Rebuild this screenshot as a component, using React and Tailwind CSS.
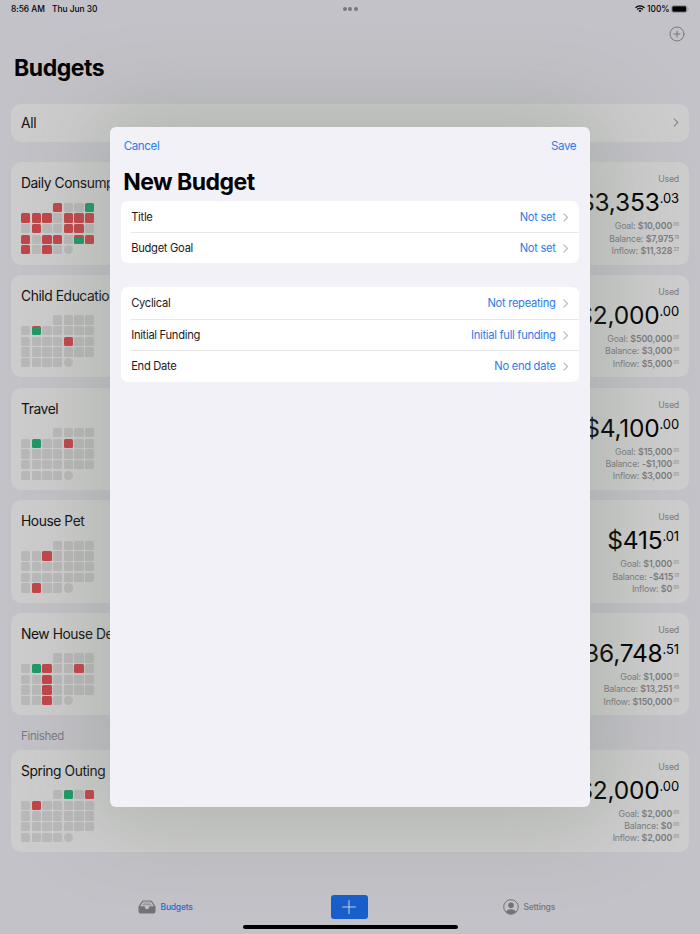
import React from "react";

// Calendar cells: "." empty day, r spending, g income, n/m both, o today, " " outside the month.
const budgets = [
  {
    name: "Daily Consumption",
    cells: ["   r..g", "rrr.rrr", ".r..rr.", "r.rr.mr", "r.r.o"].join(""),
    whole: "$3,353",
    cents: ".03",
    rows: [["Goal:", "$10,000", ".00"], ["Balance:", "$7,975", ".19"], ["Inflow:", "$11,328", ".22"]],
  },
  {
    name: "Child Education",
    cells: ["   ....", ".n.....", "....r..", ".......", "....o"].join(""),
    whole: "$2,000",
    cents: ".00",
    rows: [["Goal:", "$500,000", ".00"], ["Balance:", "$3,000", ".00"], ["Inflow:", "$5,000", ".00"]],
  },
  {
    name: "Travel",
    cells: ["   ....", ".g..r..", ".......", ".......", "....o"].join(""),
    whole: "$4,100",
    cents: ".00",
    rows: [["Goal:", "$15,000", ".00"], ["Balance:", "-$1,100", ".00"], ["Inflow:", "$3,000", ".00"]],
  },
  {
    name: "House Pet",
    cells: ["   ....", "..r....", ".......", ".......", ".r..o"].join(""),
    whole: "$415",
    cents: ".01",
    rows: [["Goal:", "$1,000", ".00"], ["Balance:", "-$415", ".01"], ["Inflow:", "$0", ".00"]],
  },
  {
    name: "New House Decor",
    cells: ["   ....", ".gr..r.", "..r....", "..r....", "..r.o"].join(""),
    whole: "$136,748",
    cents: ".51",
    rows: [["Goal:", "$1,000", ".00"], ["Balance:", "$13,251", ".49"], ["Inflow:", "$150,000", ".00"]],
  },
];

const finished = {
  name: "Spring Outing",
  cells: ["   .g.r", ".r.....", ".......", ".......", "....o"].join(""),
  whole: "$2,000",
  cents: ".00",
  rows: [["Goal:", "$2,000", ".00"], ["Balance:", "$0", ".00"], ["Inflow:", "$2,000", ".00"]],
};

const cellStyles = {
  " ": "",
  ".": "rounded-[1.5px] bg-[#b9b9b9]",
  r: "rounded-[1.5px] bg-[#c24549]",
  g: "rounded-[1.5px] bg-[#1f9865]",
  n: "rounded-[1.5px] bg-linear-to-b from-[#c24549] from-12% to-[#1f9865] to-12%",
  m: "rounded-[1.5px] bg-linear-to-b from-[#c24549] from-35% to-[#1f9865] to-35%",
  o: "rounded-full bg-[#b9b9b9]",
};

function Chevron({ className }) {
  return (
    <svg viewBox="0 0 6 10" className={className} fill="none" stroke="currentColor" strokeWidth="1.3" strokeLinecap="round" strokeLinejoin="round">
      <path d="M1 1l4 4-4 4" />
    </svg>
  );
}

function Card({ b }) {
  return (
    <div className="flex h-[102.4px] shrink-0 justify-between rounded-[10px] bg-[#cdcdcd] pt-[12px] pr-[10px] pl-[10px]">
      <div>
        <div className="text-[13.8px] leading-[18px] tracking-[-0.42px] whitespace-nowrap text-[#111]">{b.name}</div>
        <div className="mt-[10.4px] grid w-[73.4px] grid-cols-7 gap-[1.4px]">
          {b.cells.split("").map((c, i) => (
            <div key={i} className={"h-[9.25px] " + cellStyles[c]} />
          ))}
        </div>
      </div>
      <div className="flex flex-col items-end whitespace-nowrap text-[#7c7c7e]">
        <div className="h-[10px] text-[8.8px] leading-[10px] tracking-[-0.25px]">Used</div>
        <div className="mt-[3px] flex h-[30px] items-start text-black">
          <span className="text-[24.5px] leading-[30px] tracking-[-0.2px]">{b.whole}</span>
          <span className="text-[13px] leading-[22.5px] tracking-[-0.1px]">{b.cents}</span>
        </div>
        <div className="mt-[3px]">
          {b.rows.map(([label, value, cents]) => (
            <div key={label} className="flex h-[12.4px] items-start justify-end text-[8.8px] leading-[12.6px]">
              <span className="mr-[2.5px] tracking-[-0.2px]">{label}</span>
              <span className="font-semibold tracking-[-0.1px]">{value}</span>
              <span className="ml-[0.3px] text-[4.5px] leading-[9px] tracking-[-0.1px]">{cents}</span>
            </div>
          ))}
        </div>
      </div>
    </div>
  );
}

function Group({ items, className }) {
  return (
    <div className={"rounded-[7px] bg-white pl-[10.5px] " + className}>
      {items.map(([label, value], i) => (
        <div key={label} className={"flex h-[31.4px] items-center pr-[10.5px] text-[11.2px] tracking-[-0.3px] " + (i ? "border-t border-[#e8e8ea] pt-[0.4px]" : "pt-[1.4px]")}>
          <span className="text-[#1b1b1d]">{label}</span>
          <span className="ml-auto text-[#2f7bea]">{value}</span>
          <Chevron className="ml-[7.7px] h-[9px] w-[5.4px] text-[#b9b9bd]" />
        </div>
      ))}
    </div>
  );
}

export default function App() {
  return (
    <div className="relative flex h-[934px] w-[700px] flex-col overflow-hidden bg-[#c3c2c8] font-['Inter','Liberation_Sans',sans-serif]">
      <div className="flex h-[18px] items-center px-[11px] text-[8.4px] font-medium text-black">
        <span className="w-[41px] tracking-[-0.05px]">8:56 AM</span>
        <span className="w-[46px] tracking-[-0.02px]">Thu Jun 30</span>
        <span className="ml-[245px] flex gap-[1.3px]">
          <i className="size-[4px] rounded-full bg-[#78787c]" />
          <i className="size-[4px] rounded-full bg-[#78787c]" />
          <i className="size-[4px] rounded-full bg-[#78787c]" />
        </span>
        <svg viewBox="0 0 20 15" className="ml-auto h-[7.5px] w-[10px]" fill="none" stroke="black" strokeWidth="2.6">
          <path d="M1 5.5a13 13 0 0 1 18 0M4.3 9a8.3 8.3 0 0 1 11.4 0" />
          <path d="M7 11.3a4.4 4.4 0 0 1 6 0L10 14.6z" fill="black" stroke="none" />
        </svg>
        <span className="mr-[1.5px] ml-[2.5px] tracking-[-0.05px]">100%</span>
        <svg viewBox="0 0 18 8" className="h-[8px] w-[18px]">
          <rect x="0.5" y="0.5" width="15.5" height="7" rx="2" fill="none" stroke="#8b8b8f" strokeWidth="0.7" />
          <rect x="1.3" y="1.3" width="13.9" height="5.4" rx="1.3" />
          <path d="M16.8 2.8v2.4a1.3 1.3 0 0 0 0-2.4z" fill="#8b8b8f" />
        </svg>
      </div>
      <div className="flex h-[32px] items-center justify-end pr-[15px]">
        <svg viewBox="0 0 16 16" className="size-[16px]" fill="none" stroke="#77777b" strokeWidth="1" strokeLinecap="round">
          <circle cx="8" cy="8" r="7" />
          <path d="M8 5v6M5 8h6" />
        </svg>
      </div>
      <h1 className="mt-[4px] h-[28px] pl-[14px] text-[23px] leading-[28px] font-bold tracking-[-0.45px]">Budgets</h1>
      <div className="mx-[11px] mt-[21.7px] flex h-[38.2px] shrink-0 items-center justify-between rounded-[10px] bg-[#cdcdcd] pr-[10px] pl-[10px] text-[13.8px] tracking-[-0.3px] text-[#111]">
        <span className="pt-[1.6px]">All</span>
        <Chevron className="h-[9px] w-[6px] text-[#8a8a8c]" />
      </div>
      <div className="mx-[11px] mt-[20.4px] flex flex-col gap-[10.3px]">
        {budgets.map((b) => (
          <Card key={b.name} b={b} />
        ))}
      </div>
      <div className="h-[34.3px] shrink-0 pl-[21px] text-[11.4px] leading-[43.6px] tracking-[-0.3px] text-[#7a7a7e]">Finished</div>
      <div className="mx-[11px]">
        <Card b={finished} />
      </div>
      <div className="mt-[39px] flex h-[32px] items-center text-[8.5px] font-medium tracking-[-0.2px]">
        <svg viewBox="0 0 36 28" className="ml-[138px] h-[14px] w-[18px]" fill="#737377">
          <path d="M1 13L7 3.5Q8.5 1 11.5 1h13Q27.5 1 29 3.5L35 13v10q0 4-4 4H5q-4 0-4-4zM4.2 12.5H12q1.8 0 2 1.8a4 4 0 0 0 8 0q.2-1.8 2-1.8h7.8L27 4.8Q26 3.2 24.2 3.2H11.8Q10 3.2 9 4.8z" fillRule="evenodd" />
          <path d="M11 6h14M9 9.5h18" stroke="#737377" strokeWidth="1.3" />
        </svg>
        <span className="ml-[4.5px] w-[170px] text-[#276cd0]">Budgets</span>
        <div className="grid h-[24px] w-[37.5px] place-items-center rounded-[3px] bg-[#195fcb]">
          <svg viewBox="0 0 14 14" className="size-[14px]" stroke="#bfcbe2" strokeWidth="1.1" strokeLinecap="round">
            <path d="M7 .6v12.8M.6 7h12.8" />
          </svg>
        </div>
        <svg viewBox="0 0 16 16" className="ml-[135px] size-[16px]" fill="#737377">
          <circle cx="8" cy="8" r="7.3" fill="none" stroke="#737377" strokeWidth="1" />
          <circle cx="8" cy="6.3" r="2.8" />
          <path d="M3 12.8q1.2-2.5 5-2.5t5 2.5Q11 15 8 15t-5-2.2z" />
        </svg>
        <span className="ml-[4.5px] text-[#77777b]">Settings</span>
      </div>
      <div className="mx-auto mt-[1.6px] h-[4px] w-[215px] rounded-full bg-black" />

      <div className="absolute top-[126.7px] left-[109.7px] h-[680px] w-[480.5px] rounded-[6px] bg-[#f2f1f7] px-[11px] shadow-[0_0_86px_14px_rgba(106,122,104,0.31)]">
        <div className="flex h-[39px] items-center justify-between px-[3px] pt-[1.5px] text-[11.6px] tracking-[-0.4px] text-[#2f7bea]">
          <span>Cancel</span>
          <span>Save</span>
        </div>
        <h2 className="h-[35px] pl-[2.5px] text-[23px] leading-[32px] font-bold tracking-[-0.52px]">New Budget</h2>
        <Group items={[["Title", "Not set"], ["Budget Goal", "Not set"]]} className="" />
        <Group items={[["Cyclical", "Not repeating"], ["Initial Funding", "Initial full funding"], ["End Date", "No end date"]]} className="mt-[24px]" />
      </div>
    </div>
  );
}
